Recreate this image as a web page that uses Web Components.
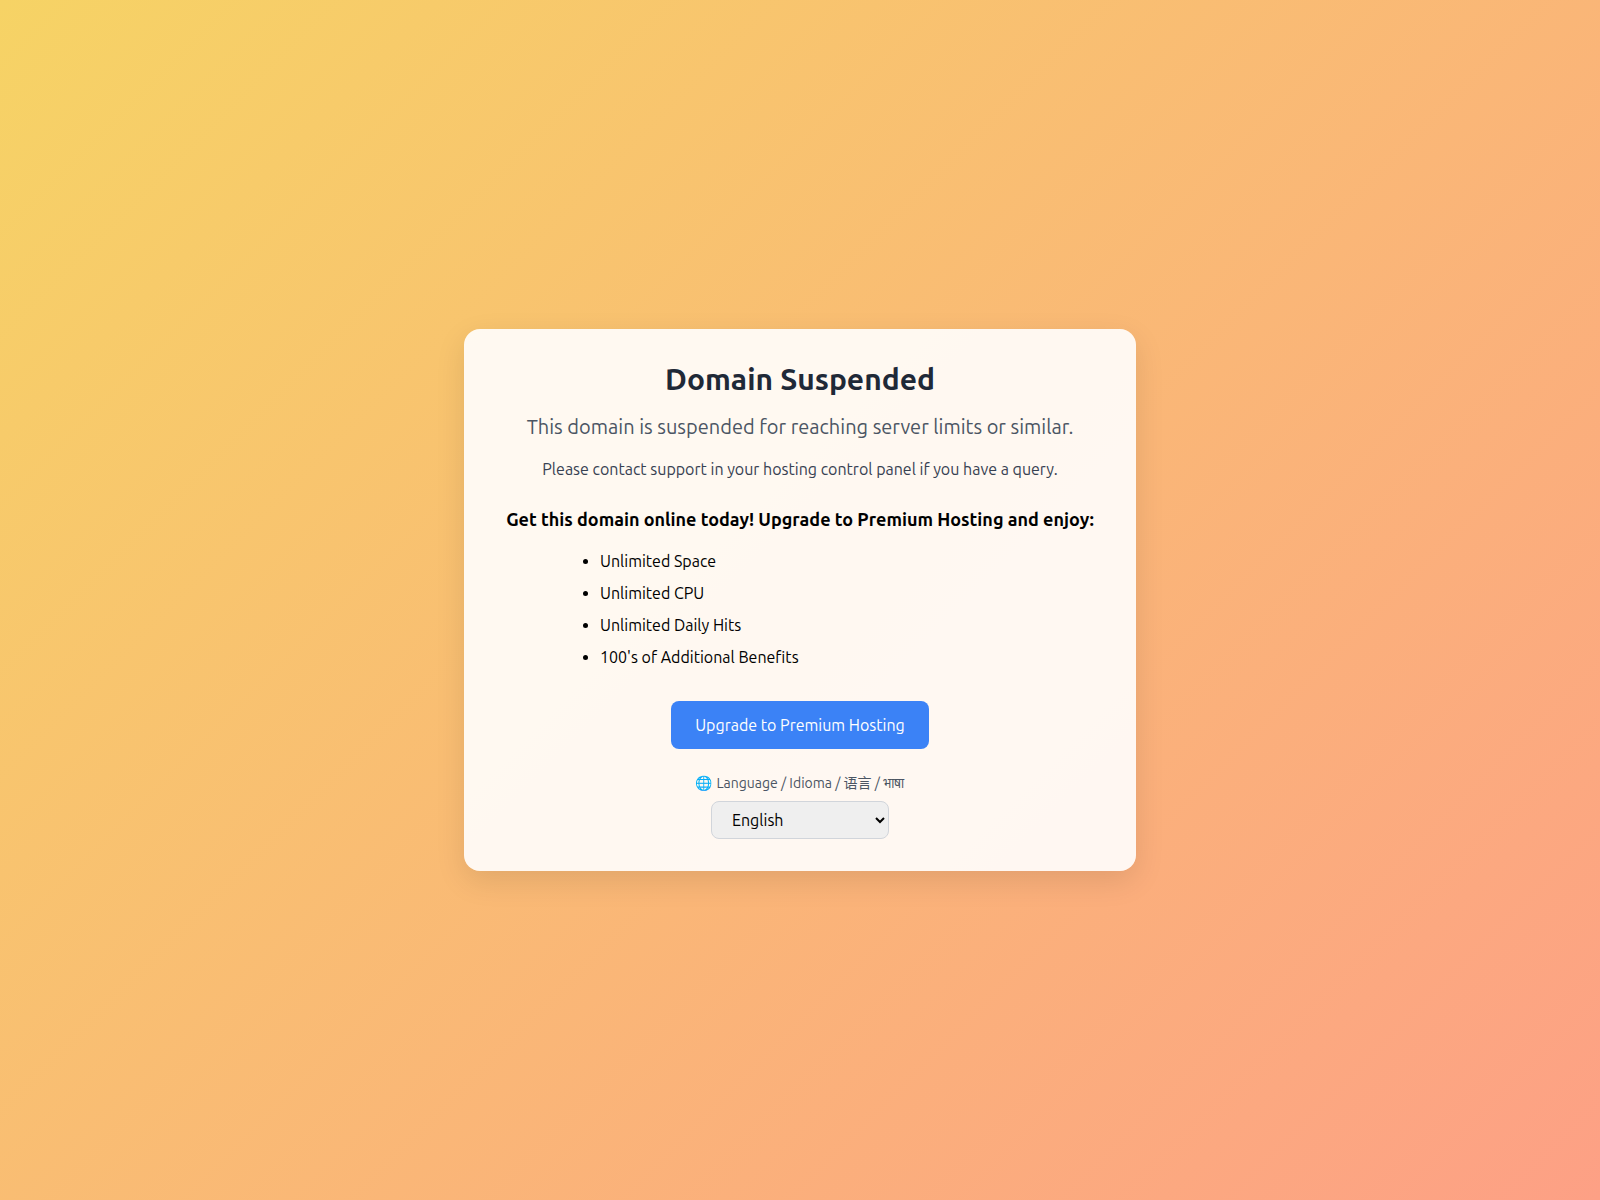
<!DOCTYPE html>
<html lang="en">
<head>
<meta charset="utf-8">
<meta name="viewport" content="width=device-width, initial-scale=1">
<title>Domain Suspended</title>
<style>
body {
  margin: 0;
  font-family: Ubuntu, "Noto Color Emoji", "Noto Sans CJK SC", FreeSans, sans-serif;
  font-weight: 400;
  font-size: 16px;
  line-height: 24px;
  color: #000;
}
</style>
</head>
<body>
<suspended-page>
  <notice-card>
    <span slot="title">Domain Suspended</span>
    <span slot="lead">This domain is suspended for reaching server limits or similar.</span>
    <span slot="detail">Please contact support in your hosting control panel if you have a query.</span>
    <benefit-list></benefit-list>
    <upgrade-link href="#upgrade">Upgrade to Premium Hosting</upgrade-link>
    <language-picker></language-picker>
  </notice-card>
</suspended-page>
<script>
class BaseElement extends HTMLElement {
  constructor() {
    super();
    this.attachShadow({ mode: "open" }).innerHTML =
      "<style>*{box-sizing:border-box}h1,h2,p,ul{margin:0}</style>" + this.constructor.markup;
  }
}

class SuspendedPage extends BaseElement {
  static markup = `
    <style>
      :host { display: flex; align-items: center; justify-content: center; min-height: 100vh;
        background: linear-gradient(135deg, #f6d365 0%, #fda085 100%); }
      main { width: 100%; max-width: 672px; }
    </style>
    <main><slot></slot></main>`;
}

class NoticeCard extends BaseElement {
  static markup = `
    <style>
      :host { display: block; }
      section { display: flex; flex-direction: column; align-items: center; gap: 16px; padding: 32px;
        text-align: center; background: rgba(255, 255, 255, 0.9); border-radius: 16px;
        box-shadow: 0 10px 30px rgba(0, 0, 0, 0.1); }
      h1 { font-size: 30px; line-height: 36px; font-weight: 700; color: #1f2937; }
      .lead { font-size: 20px; line-height: 28px; color: #4b5563; }
      .detail { color: #374151; }
      .more { display: flex; flex-direction: column; align-items: center; gap: 24px; width: 100%; padding-top: 8px; }
    </style>
    <section>
      <h1><slot name="title"></slot></h1>
      <p class="lead"><slot name="lead"></slot></p>
      <p class="detail"><slot name="detail"></slot></p>
      <div class="more"><slot></slot></div>
    </section>`;
}

class BenefitList extends BaseElement {
  static markup = `
    <style>
      :host { display: flex; flex-direction: column; align-items: center; gap: 16px; width: 100%; }
      h2 { font-size: 18px; line-height: 28px; font-weight: 600; }
      ul { width: 100%; max-width: 448px; padding-left: 24px; text-align: left; }
      li { margin-bottom: 8px; }
    </style>
    <h2>Get this domain online today! Upgrade to Premium Hosting and enjoy:</h2>
    <ul>
      <li>Unlimited Space</li>
      <li>Unlimited CPU</li>
      <li>Unlimited Daily Hits</li>
      <li>100's of Additional Benefits</li>
    </ul>`;
}

class UpgradeLink extends BaseElement {
  static markup = `
    <style>
      :host { display: block; }
      a { display: block; padding: 12px 24px; border-radius: 8px; background: #3b82f6; color: #fff; text-decoration: none; }
      a:hover { background: #2563eb; }
    </style>
    <a><slot></slot></a>`;
  connectedCallback() {
    this.shadowRoot.querySelector("a").href = this.getAttribute("href");
  }
}

class LanguagePicker extends BaseElement {
  static markup = `
    <style>
      :host { display: flex; flex-direction: column; align-items: center; gap: 8px; }
      label { font-size: 14px; line-height: 20px; color: #4b5563; }
      select { width: 178px; height: 38px; padding: 8px 0 8px 16px; border: 1px solid #d1d5db; border-radius: 8px;
        background: #efefef; color: #000; font: inherit; }
    </style>
    <label for="language">🌐 Language / Idioma / 语言 / भाषा</label>
    <select id="language">
      <option>English</option>
      <option>Español</option>
      <option>中文</option>
      <option>हिन्दी</option>
    </select>`;
}

customElements.define("suspended-page", SuspendedPage);
customElements.define("notice-card", NoticeCard);
customElements.define("benefit-list", BenefitList);
customElements.define("upgrade-link", UpgradeLink);
customElements.define("language-picker", LanguagePicker);
</script>
</body>
</html>
